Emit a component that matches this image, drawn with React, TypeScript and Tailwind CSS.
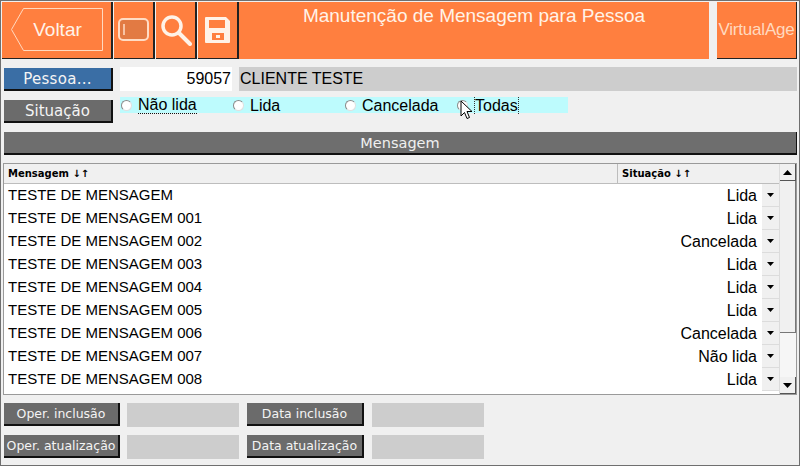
const rows = [
  ["TESTE DE MENSAGEM", "Lida"],
  ["TESTE DE MENSAGEM 001", "Lida"],
  ["TESTE DE MENSAGEM 002", "Cancelada"],
  ["TESTE DE MENSAGEM 003", "Lida"],
  ["TESTE DE MENSAGEM 004", "Lida"],
  ["TESTE DE MENSAGEM 005", "Lida"],
  ["TESTE DE MENSAGEM 006", "Cancelada"],
  ["TESTE DE MENSAGEM 007", "Não lida"],
  ["TESTE DE MENSAGEM 008", "Lida"],
];

const dejavu = "font-['DejaVu_Sans',sans-serif]";

function Radio() {
  return (
    <span className="w-[11px] h-[11px] rounded-full bg-white border border-[#8a8a8a] border-r-[#e0e0e0] border-b-[#e0e0e0] shrink-0" />
  );
}

function GrayBtn({ label, w, text = "text-[12.5px]", bg = "bg-[#6b6b6b]" }: { label: string; w: string; text?: string; bg?: string }) {
  return (
    <div className={`${w} h-[23px] pt-[2px] ${bg} ${dejavu} ${text} border-b-2 border-r-2 border-[#111] text-[#f4f4f4] flex items-center justify-center whitespace-nowrap shrink-0`}>
      {label}
    </div>
  );
}

function Arrow({ up }: { up?: boolean }) {
  return (
    <svg width="9" height="5" viewBox="0 0 9 5">
      <path d={up ? "M4.5 0 9 5H0z" : "M0 0h9L4.5 5z"} fill="#000" />
    </svg>
  );
}

export default function App() {
  return (
    <div className="relative w-[800px] h-[466px] bg-[#f0f0f0] border border-[#6f6f6f] overflow-hidden font-['Liberation_Sans',sans-serif]">
      {/* header */}
      <div className="flex h-[57px] mt-px">
        <div className="w-[111px] ml-px bg-[#ff7f3f] border-r-2 border-b border-[#222] flex items-center justify-center relative shrink-0">
          <svg className="absolute left-[9px] top-[6px]" width="94" height="44" viewBox="0 0 94 44">
            <path d="M12.5.5h79v42h-79L.5 21.5z" fill="none" stroke="#ffd9bf" />
          </svg>
          <span className="relative text-[#fff3e8] text-[19px] pl-[2px]">Voltar</span>
        </div>
        <div className="w-[41px] ml-px bg-[#ff7f3f] border-r-2 border-b border-[#222] flex items-center justify-center shrink-0">
          <svg width="32" height="24" viewBox="0 0 32 24">
            <rect x="1" y="1" width="29" height="21" rx="4" fill="#e27a43" stroke="#ffdcc4" strokeWidth="2" />
            <path d="M6 6v11" stroke="#ffdcc4" strokeWidth="1.5" />
          </svg>
        </div>
        <div className="w-[41px] ml-px bg-[#ff7f3f] border-r-2 border-b border-[#222] flex items-center justify-center shrink-0">
          <svg width="32" height="32" viewBox="0 0 32 32">
            <circle cx="12" cy="12" r="9" fill="none" stroke="#fff3e8" strokeWidth="3.5" />
            <path d="m19 19 11 11" stroke="#fff3e8" strokeWidth="4" strokeLinecap="round" />
          </svg>
        </div>
        <div className="w-[41px] ml-px bg-[#ff7f3f] border-r-2 border-b border-[#222] flex items-center justify-center shrink-0">
          <svg width="26" height="26" viewBox="0 0 26 26">
            <path d="M1 0h20l4 4v21a1 1 0 0 1-1 1H1a1 1 0 0 1-1-1V1a1 1 0 0 1 1-1z" fill="#fff3e8" />
            <rect x="4" y="3" width="16" height="8" fill="#ff7f3f" />
            <rect x="7" y="16" width="12" height="7" fill="#ff7f3f" />
            <rect x="11" y="18" width="4" height="3" fill="#fff3e8" />
          </svg>
        </div>
        <div className="w-[470px] bg-[#ff7f3f] text-[#fff3e8] text-[19px] text-center shrink-0">Manutenção de Mensagem para Pessoa</div>
        <div className="w-[80px] ml-[8px] bg-[#ff7f3f] border-r border-b border-[#222] text-[#ffd9bf] text-[17px] flex items-center justify-center shrink-0 tracking-[-0.2px]">VirtualAge</div>
      </div>

      {/* pessoa */}
      <div className="flex items-center mt-[8px] ml-[3px] h-[24px]">
        <GrayBtn label="Pessoa..." w="w-[109px]" text="text-[15px] tracking-[0.3px]" bg="bg-[#3a6ea5]" />
        <div className="w-[112px] h-[24px] ml-[7px] bg-white text-[16px] text-right flex items-center justify-end pr-[1px] shrink-0">59057</div>
        <div className="w-[558px] h-[24px] ml-[7px] bg-[#cdcdcd] text-[16px] flex items-center pl-[1px] shrink-0">CLIENTE TESTE</div>
      </div>

      {/* situacao */}
      <div className="flex items-start mt-[6px] ml-[3px] h-[29px]">
        <div className="mt-[3px]"><GrayBtn label="Situação" w="w-[109px]" text="text-[15px]" /></div>
        <div className="w-[448px] h-[16px] ml-[7px] bg-[#bdfbfd] relative text-[16px] flex items-center">
          <div className="w-[113px] flex items-center gap-[6px] pl-[1px]"><Radio /><span className="border-b border-dotted border-[#111] leading-[16px] pt-[1px]">Não lida</span></div>
          <div className="w-[112px] flex items-center gap-[6px]"><Radio /><span className="pt-[1px]">Lida</span></div>
          <div className="w-[112px] flex items-center gap-[6px]"><Radio /><span className="pt-[1px]">Cancelada</span></div>
          <div className="flex items-center gap-[6px]"><Radio /><span className="border-x border-dotted border-[#333] leading-[16px] pt-[1px]">Todas</span></div>
        </div>
      </div>

      {/* mensagem bar */}
      <div className={`mt-[6px] ml-[3px] w-[793px] h-[23px] pt-[2px] bg-[#6e6e6e] border-b-2 border-r border-[#111] text-[#f0f0f0] text-[14.5px] flex items-center justify-center ${dejavu}`}>Mensagem</div>

      {/* table */}
      <div className="flex mt-[8px] ml-[2px] w-[794px] h-[232px] border border-[#9a9a9a] bg-white">
        <div className="flex-1 min-w-0">
          <div className={`flex h-[20px] bg-[#f0f0f0] border-b border-[#bdbdbd] text-[10px] font-bold ${dejavu}`}>
            <div className="w-[614px] pl-[4px] flex items-center border-r border-[#bdbdbd]">Mensagem ↓↑</div>
            <div className="flex-1 pl-[4px] flex items-center">Situação ↓↑</div>
          </div>
          {rows.map(([msg, sit]) => (
            <div key={msg} className="flex h-[23px] text-[16px]">
              <div className="flex-1 pl-[4px] flex items-center text-[15px]">{msg}</div>
              <div className="pr-[5px] flex items-center">{sit}</div>
              <div className="w-[17px] bg-[#f0f0f0] border-b border-[#dcdcdc] flex items-center justify-center">
                <svg width="7" height="4" viewBox="0 0 7 4"><path d="M0 0h7L3.5 4z" fill="#000" /></svg>
              </div>
            </div>
          ))}
        </div>
        <div className="w-[17px] bg-[#e9e9e9] flex flex-col border-l border-[#dcdcdc]">
          <div className="h-[17px] bg-[#f0f0f0] border-r border-b border-[#555] flex items-center justify-center"><Arrow up /></div>
          <div className="h-[152px] bg-[#f0f0f0] border-r border-b border-[#777]" />
          <div className="flex-1 bg-[#f6f6f6]" />
          <div className="h-[17px] bg-[#f0f0f0] border-r border-b border-[#555] flex items-center justify-center"><Arrow /></div>
        </div>
      </div>

      {/* footer */}
      <div className="flex flex-col gap-[8px] mt-[8px] ml-[3px]">
        <div className="flex">
          <GrayBtn label="Oper. inclusão" w="w-[116px]" />
          <div className="w-[112px] h-[24px] ml-[7px] bg-[#cdcdcd]" />
          <div className="ml-[8px]"><GrayBtn label="Data inclusão" w="w-[117px]" /></div>
          <div className="w-[112px] h-[24px] ml-[8px] bg-[#cdcdcd]" />
        </div>
        <div className="flex">
          <GrayBtn label="Oper. atualização" w="w-[116px]" />
          <div className="w-[112px] h-[24px] ml-[7px] bg-[#cdcdcd]" />
          <div className="ml-[8px]"><GrayBtn label="Data atualização" w="w-[117px]" /></div>
          <div className="w-[112px] h-[24px] ml-[8px] bg-[#cdcdcd]" />
        </div>
      </div>

      {/* mouse cursor */}
      <svg className="absolute left-[459px] top-[99px]" width="14" height="21" viewBox="0 0 14 21">
        <path d="M1 1v15l3.5-3.5 2.5 6 2.5-1-2.5-6h5z" fill="#fff" stroke="#000" />
      </svg>
    </div>
  );
}
